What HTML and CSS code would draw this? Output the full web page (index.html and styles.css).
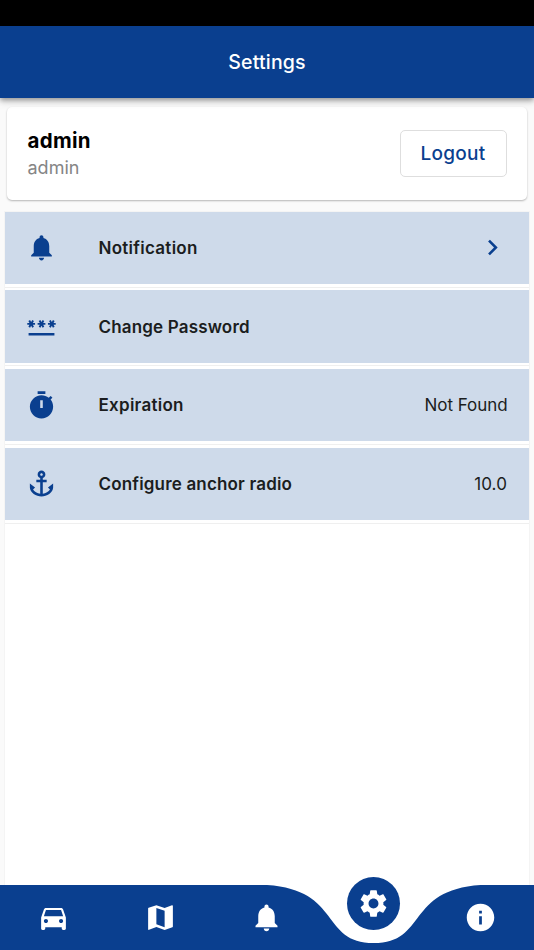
FILE: index.html
```html
<!DOCTYPE html>
<html lang="en">
<head>
<meta charset="utf-8">
<title>Settings</title>
<link rel="stylesheet" href="styles.css">
</head>
<body>
<div class="screen">
  <div class="status-bar"></div>
  <header class="app-bar"><h1 class="title">Settings</h1></header>
  <main class="content">
    <section class="account">
      <div>
        <div class="account-name">admin</div>
        <div class="account-role">admin</div>
      </div>
      <button class="logout">Logout</button>
    </section>
    <section class="list">
      <div class="item"><div class="row">
        <svg class="icon" viewBox="0 0 24 24"><path d="M12 22c1.1 0 2-.9 2-2h-4c0 1.100.9 2 2 2zm6-6v-5c0-3.070-1.640-5.640-4.500-6.320V4c0-.83-.67-1.500-1.500-1.500s-1.500.67-1.500 1.500v.68C7.630 5.360 6 7.920 6 11v5l-2 2v1h16v-1l-2-2z"/></svg>
        <span class="label notification">Notification</span>
        <svg class="icon chevron" viewBox="0 0 24 24"><path d="M10 6 8.590 7.410 13.170 12l-4.580 4.590L10 18l6-6z"/></svg>
      </div></div>
      <div class="item"><div class="row">
        <svg class="icon" viewBox="0 0 24 24"><path d="M2 17h20v2H2v-2zm1.150-4.050L4 11.470l.85 1.480 1.300-.75-.85-1.480H7v-1.500H5.300l.85-1.470L4.850 7 4 8.470 3.150 7l-1.300.75.85 1.470H1v1.500h1.700l-.85 1.480 1.300.75zm6.700-.75 1.300.75.85-1.480.85 1.480 1.300-.75-.85-1.480H15v-1.500h-1.700l.85-1.470-1.300-.75L12 8.470 11.150 7l-1.300.75.85 1.470H9v1.500h1.700l-.85 1.480zM23 9.220h-1.700l.85-1.470-1.300-.75L20 8.470 19.150 7l-1.300.75.85 1.470H17v1.500h1.700l-.85 1.480 1.300.75.85-1.480.85 1.480 1.300-.75-.85-1.480H23v-1.500z"/></svg>
        <span class="label">Change Password</span>
      </div></div>
      <div class="item"><div class="row">
        <svg class="icon timer" viewBox="0 0 24 24"><path fill-rule="evenodd" d="M15 1H9v2h6V1zm-4 13h2V8h-2v6zm8.030-6.610 1.420-1.420c-.43-.51-.9-.99-1.410-1.410l-1.420 1.420C16.070 4.740 14.120 4 12 4c-4.970 0-9 4.030-9 9s4.020 9 9 9 9-4.030 9-9c0-2.120-.74-4.070-1.970-5.610z"/></svg>
        <span class="label expiration">Expiration</span>
        <span class="value">Not Found</span>
      </div></div>
      <div class="item"><div class="row">
        <svg class="icon" viewBox="0 0 24 24"><path d="m17 15 1.550 1.550c-.96 1.690-3.330 3.040-5.550 3.370V11h3V9h-3V7.820C14.160 7.400 15 6.300 15 5c0-1.650-1.350-3-3-3S9 3.350 9 5c0 1.300.84 2.400 2 2.820V9H8v2h3v8.920c-2.220-.33-4.590-1.680-5.550-3.370L7 15l-4-3v3c0 3.880 4.920 7 9 7s9-3.120 9-7v-3l-4 3zM12 4c.55 0 1 .45 1 1s-.45 1-1 1-1-.45-1-1 .45-1 1-1z"/></svg>
        <span class="label">Configure anchor radio</span>
        <span class="value decimal">10.0</span>
      </div></div>
    </section>
  </main>
  <nav class="nav">
    <svg class="nav-shape" viewBox="0 0 534 65"><path d="M0 0H267C341.760 4.840 320.400 58.100 373.800 58.100C427.200 58.100 405.840 4.840 480.600 0H534V65H0Z"/></svg>
    <div class="nav-items">
      <svg class="nav-icon" viewBox="0 0 24 24"><path d="M18.920 6.010C18.720 5.420 18.160 5 17.500 5h-11c-.66 0-1.210.42-1.420 1.010L3 12v8c0 .55.45 1 1 1h1c.55 0 1-.45 1-1v-1h12v1c0 .55.45 1 1 1h1c.55 0 1-.45 1-1v-8l-2.080-5.990zM6.500 16c-.83 0-1.500-.67-1.500-1.500S5.670 13 6.500 13s1.500.67 1.500 1.500S7.330 16 6.500 16zm11 0c-.83 0-1.500-.67-1.500-1.500s.67-1.500 1.500-1.500 1.500.67 1.500 1.500-.67 1.500-1.500 1.500zM5 11l1.500-4.500h11L19 11H5z"/></svg>
      <svg class="nav-icon" viewBox="0 0 24 24"><path d="m20.500 3-.16.03L15 5.100 9 3 3.360 4.900c-.21.07-.36.25-.36.48V20.500c0 .28.22.5.5.5l.16-.03L9 18.900l6 2.100 5.640-1.900c.21-.07.36-.25.36-.48V3.500c0-.28-.22-.5-.5-.5zM15 19l-6-2.110V5l6 2.110V19z"/></svg>
      <svg class="nav-icon" viewBox="0 0 24 24"><path d="M12 22c1.100 0 2-.9 2-2h-4c0 1.100.9 2 2 2zm6-6v-5c0-3.070-1.640-5.640-4.500-6.320V4c0-.83-.67-1.500-1.500-1.500s-1.500.67-1.500 1.500v.68C7.630 5.360 6 7.920 6 11v5l-2 2v1h16v-1l-2-2z"/></svg>
      <div class="selected"><svg class="nav-icon" viewBox="0 0 24 24"><path d="M19.140 12.940c.04-.3.06-.61.06-.94 0-.32-.02-.64-.07-.94l2.030-1.580c.18-.14.23-.41.12-.61l-1.920-3.320c-.12-.22-.37-.29-.59-.22l-2.390.96c-.5-.38-1.030-.7-1.620-.94l-.36-2.540c-.04-.24-.24-.41-.48-.41h-3.840c-.24 0-.43.17-.47.41l-.36 2.540c-.59.24-1.130.57-1.620.94l-2.390-.96c-.22-.08-.47 0-.59.22L2.740 8.870c-.12.21-.08.47.12.61l2.030 1.580c-.05.3-.09.63-.09.94s.02.64.07.94l-2.030 1.580c-.18.14-.23.41-.12.61l1.920 3.320c.12.22.37.29.59.22l2.390-.96c.5.38 1.030.7 1.620.94l.36 2.540c.05.24.24.41.48.41h3.840c.24 0 .44-.17.47-.41l.36-2.540c.59-.24 1.130-.56 1.620-.94l2.390.96c.22.08.47 0 .59-.22l1.920-3.320c.12-.22.07-.47-.12-.61l-2.010-1.580zM12 15.600c-1.980 0-3.600-1.620-3.600-3.600s1.620-3.600 3.600-3.600 3.600 1.620 3.600 3.600-1.620 3.600-3.600 3.600z"/></svg></div>
      <svg class="nav-icon" viewBox="0 0 24 24"><path d="M12 2C6.480 2 2 6.480 2 12s4.480 10 10 10 10-4.480 10-10S17.520 2 12 2zm1 15h-2v-6h2v6zm0-8h-2V7h2v2z"/></svg>
    </div>
  </nav>
</div>
</body>
</html>
```
FILE: styles.css
```css
* { box-sizing: border-box; }
body { margin: 0; font-family: Inter, sans-serif; background: #fafafa; }
svg { display: block; flex: none; }
.screen { width: 534px; height: 950px; display: flex; flex-direction: column; overflow: hidden; }
.status-bar { height: 26px; background: #000; flex: none; }
.app-bar {
  height: 72.3px; flex: none; display: flex; align-items: center; justify-content: center;
  background: #0a3f8f; color: #fff; z-index: 1;
  box-shadow: 0 2px 5px rgba(0, 0, 0, .35), 0 5px 7px rgba(0, 0, 0, .1);
}
.title { margin: 0; font-size: 19.5px; line-height: 24px; font-weight: 500; letter-spacing: .2px; }
.content { flex: 1; min-height: 0; padding: 9.2px 5px 0; display: flex; flex-direction: column; }
.account {
  flex: none; height: 92.5px; margin: 0 2px 11.8px; padding: 0 20.5px; background: #fff; border-radius: 5px;
  display: flex; align-items: center; justify-content: space-between;
  box-shadow: 0 1px 2px rgba(0, 0, 0, .28);
}
.account-name { font-size: 20.5px; line-height: 27px; font-weight: 700; color: #000; letter-spacing: .3px; }
.account-role { font-size: 18px; line-height: 27px; color: #858585; }
.logout {
  width: 107px; height: 47px; padding: 0; border: 1px solid #dedede; border-radius: 5px; background: #fff;
  font: 500 19px/24px Inter, sans-serif; color: #0a3f8f; letter-spacing: .3px;
}
.list { flex: 1; background: #fff; box-shadow: 0 0 0 1px #f4f4f4; }
.item { height: 78.7px; display: flex; flex-direction: column; }
.item::after { content: ""; height: 1px; margin-top: 2.800px; background: #efefef; flex: none; }
.row { height: 72.200px; flex: none; padding: 0 21.5px 0 21px; display: flex; align-items: center; background: #cedaea; color: #1b1d20; }
.icon { width: 31px; height: 31px; fill: #0a3f8f; }
.timer { margin-top: 1px; }
.chevron { margin-left: auto; }
.label { margin-left: 41.500px; font-size: 17px; line-height: 22px; font-weight: 600; letter-spacing: .17px; }
.notification, .expiration { letter-spacing: .27px; }
.value { margin-left: auto; font-size: 17px; line-height: 22px; letter-spacing: -.05px; }
.decimal { letter-spacing: .1px; margin-right: .5px; }
.nav { position: relative; height: 65px; flex: none; }
.nav::before { content: ""; position: absolute; inset: 0 5px; background: #fff; }
.nav-shape { position: absolute; inset: 0; width: 534px; height: 65px; fill: #0a3f8f; }
.nav-items { position: relative; height: 65px; display: grid; grid-template-columns: repeat(5, 1fr); align-items: center; justify-items: center; }
.nav-icon { width: 33px; height: 33px; fill: #fff; }
.selected {
  width: 53px; height: 53px; border-radius: 50%; background: #0a3f8f; margin-top: -28px;
  display: flex; align-items: center; justify-content: center;
}
```
